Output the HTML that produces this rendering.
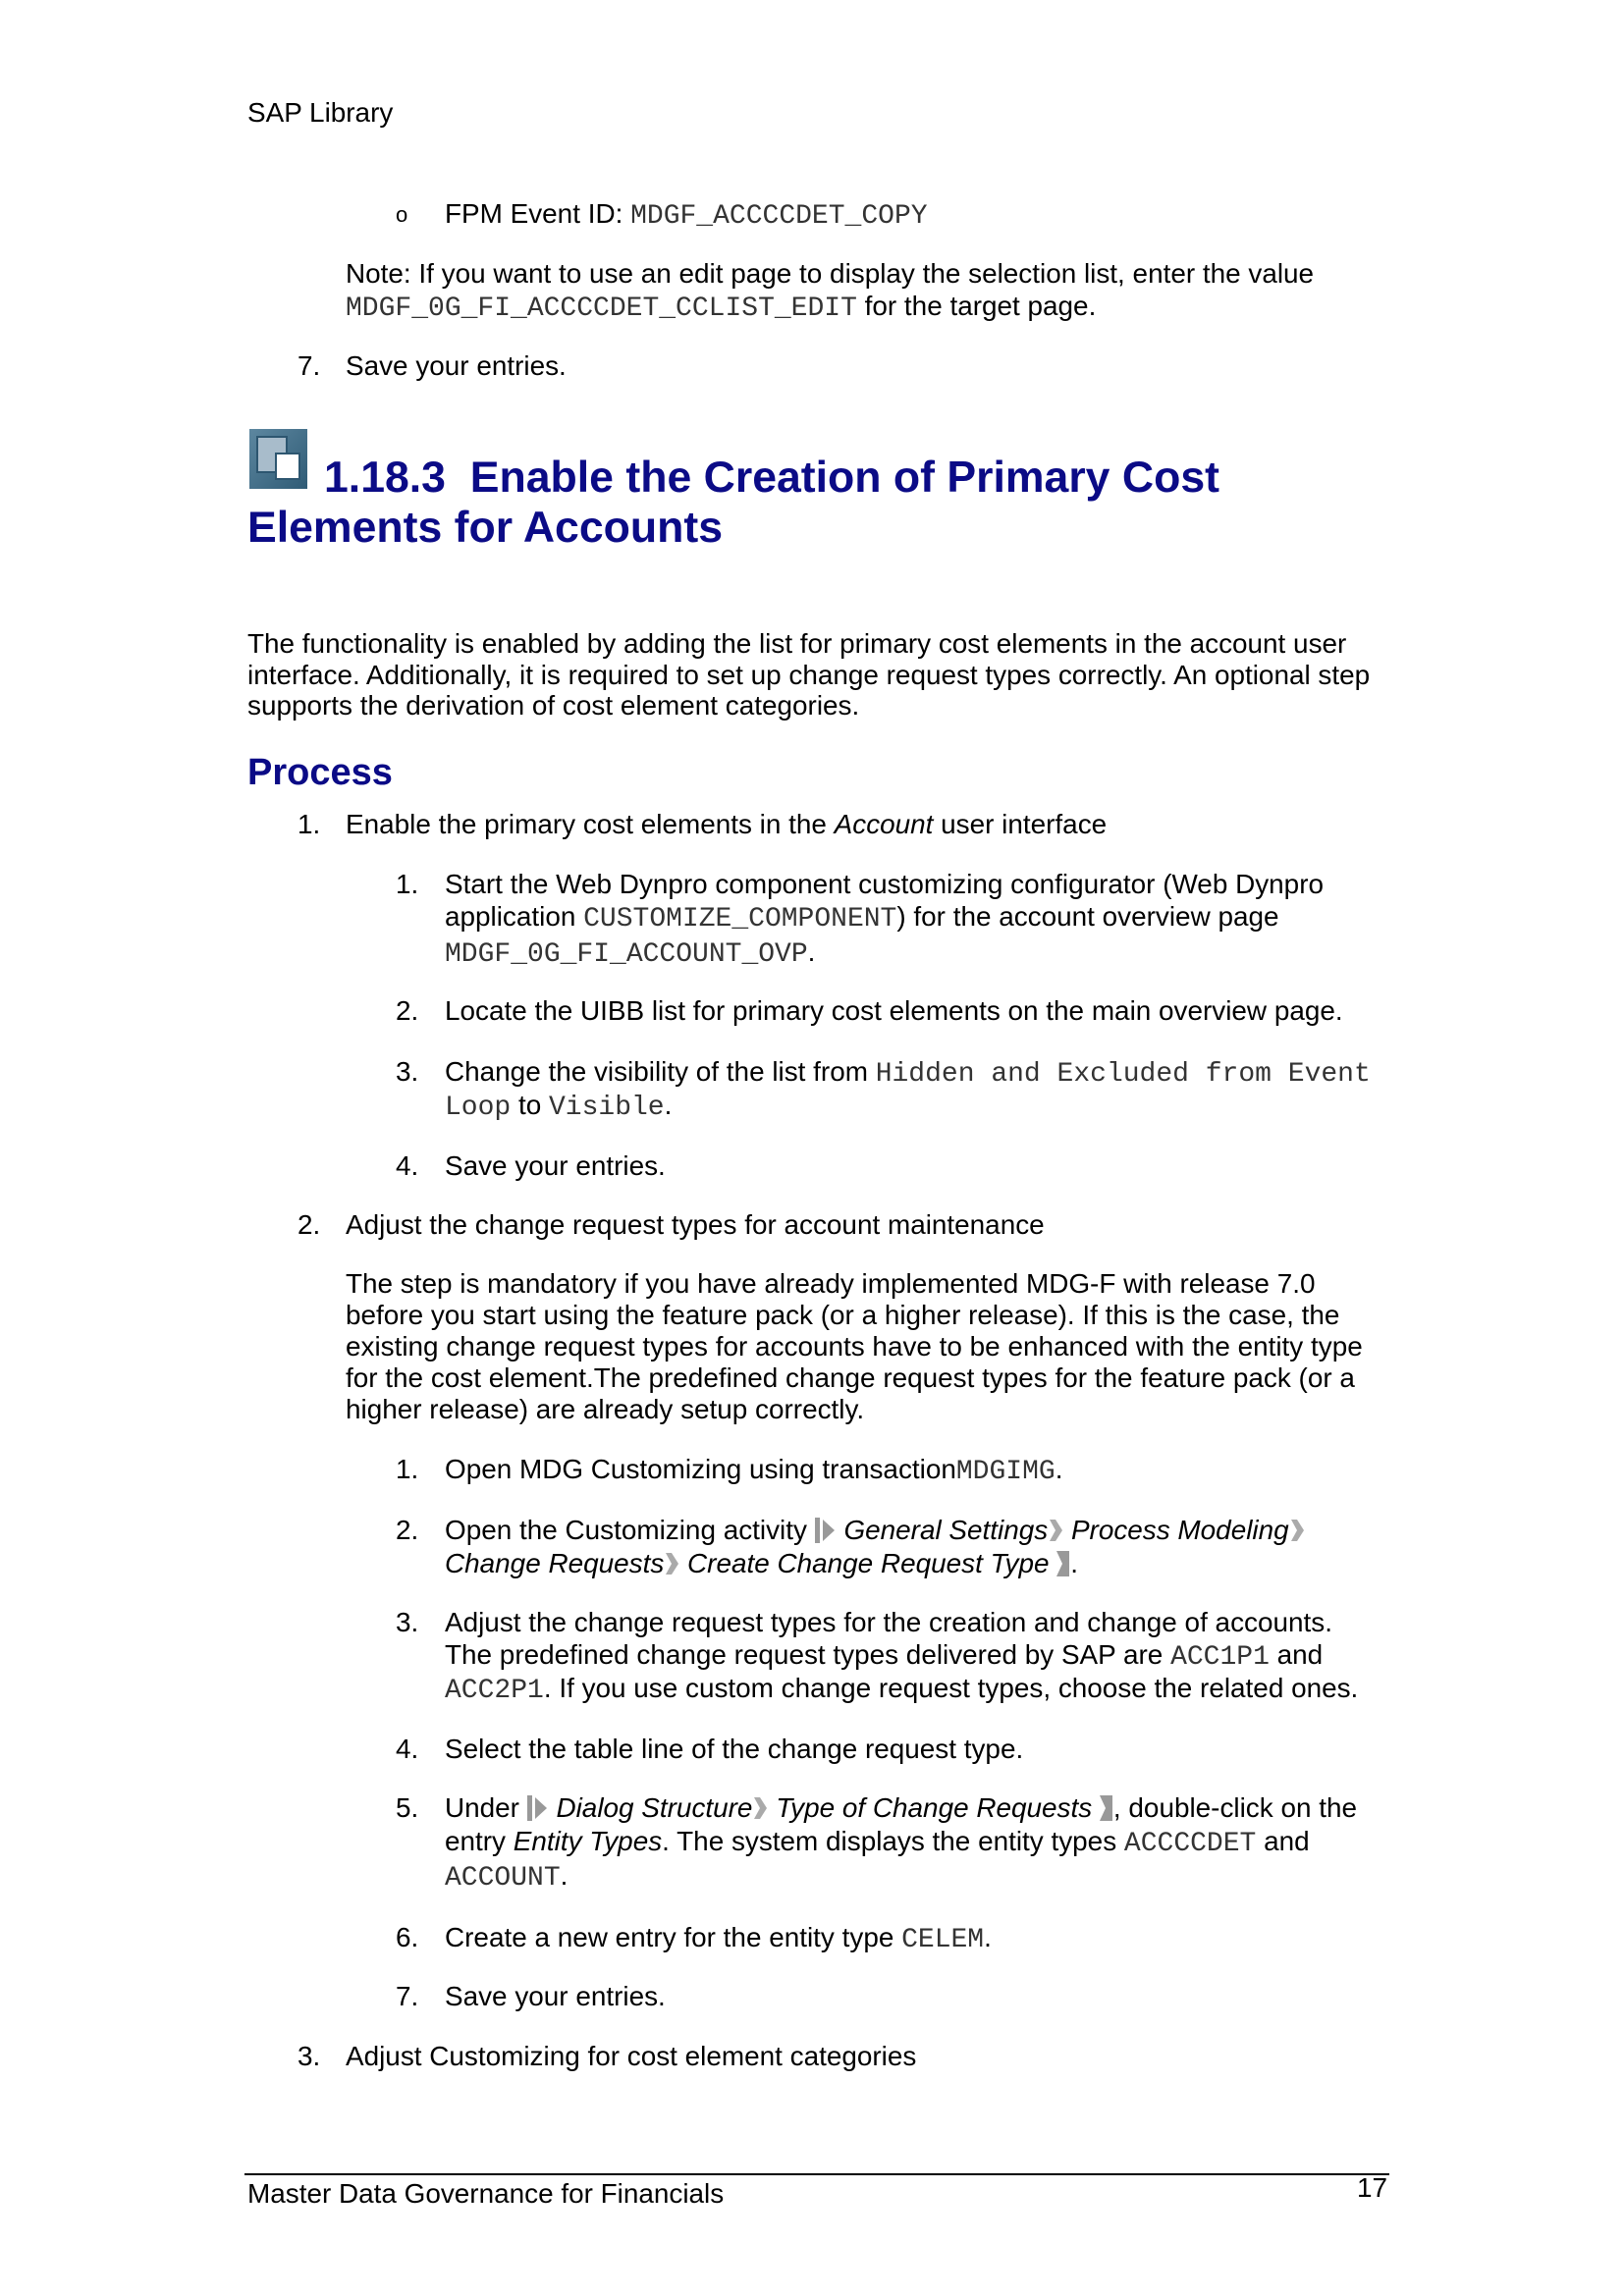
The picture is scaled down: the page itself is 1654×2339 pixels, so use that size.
<!DOCTYPE html>
<html><head><meta charset="utf-8"><style>
html,body{margin:0;padding:0;background:#fff}
body{width:1654px;height:2339px;position:relative;overflow:hidden;font-family:"Liberation Sans",Arial,sans-serif;font-size:27.9px;color:#000}
.l{position:absolute;white-space:nowrap;line-height:32px;height:32px}
.m{font-family:"Liberation Mono","Courier New",monospace;color:#333;font-size:28px}
.h{position:absolute;white-space:nowrap;color:#0b0b86;font-weight:bold}
i{font-style:italic}
svg.a{display:inline-block;vertical-align:-4px}
</style></head><body>
<div class="l" style="left:252px;top:99px">SAP Library</div>

<div class="l" style="left:403px;top:203px;font-size:22px">o</div>
<div class="l" style="left:453px;top:202px">FPM Event ID: <span class="m">MDGF_ACCCCDET_COPY</span></div>
<div class="l" style="left:352px;top:263px">Note: If you want to use an edit page to display the selection list, enter the value</div>
<div class="l" style="left:352px;top:296px"><span class="m">MDGF_0G_FI_ACCCCDET_CCLIST_EDIT</span> for the target page.</div>
<div class="l" style="left:303px;top:357px">7.</div><div class="l" style="left:352px;top:357px">Save your entries.</div>

<svg style="position:absolute;left:254px;top:437px" width="59" height="61">
<defs><linearGradient id="g" x1="0" y1="0" x2="1" y2="1"><stop offset="0" stop-color="#5d87a0"/><stop offset="1" stop-color="#2f5b75"/></linearGradient></defs>
<rect x="0" y="0" width="59" height="61" fill="url(#g)"/>
<rect x="8" y="8" width="30" height="36" fill="#a8bccb" stroke="#2d5670" stroke-width="2"/>
<rect x="27" y="25" width="24" height="26" fill="#fff" stroke="#2d5670" stroke-width="2"/>
</svg>
<div class="h" style="left:330px;top:462px;font-size:44.6px;line-height:50px">1.18.3&nbsp; Enable the Creation of Primary Cost</div>
<div class="h" style="left:252px;top:513px;font-size:44.6px;line-height:50px">Elements for Accounts</div>

<div class="l" style="left:252px;top:640px">The functionality is enabled by adding the list for primary cost elements in the account user</div>
<div class="l" style="left:252px;top:672px">interface. Additionally, it is required to set up change request types correctly. An optional step</div>
<div class="l" style="left:252px;top:703px">supports the derivation of cost element categories.</div>

<div class="h" style="left:252px;top:767px;font-size:38px;line-height:40px">Process</div>

<div class="l" style="left:303px;top:824px">1.</div><div class="l" style="left:352px;top:824px">Enable the primary cost elements in the <i>Account</i> user interface</div>

<div class="l" style="left:403px;top:885px">1.</div><div class="l" style="left:453px;top:885px">Start the Web Dynpro component customizing configurator (Web Dynpro</div>
<div class="l" style="left:453px;top:918px">application <span class="m">CUSTOMIZE_COMPONENT</span>) for the account overview page</div>
<div class="l" style="left:453px;top:954px"><span class="m">MDGF_0G_FI_ACCOUNT_OVP</span>.</div>
<div class="l" style="left:403px;top:1014px">2.</div><div class="l" style="left:453px;top:1014px">Locate the UIBB list for primary cost elements on the main overview page.</div>
<div class="l" style="left:403px;top:1076px">3.</div><div class="l" style="left:453px;top:1076px">Change the visibility of the list from <span class="m">Hidden and Excluded from Event</span></div>
<div class="l" style="left:453px;top:1110px"><span class="m">Loop</span> to <span class="m">Visible</span>.</div>
<div class="l" style="left:403px;top:1172px">4.</div><div class="l" style="left:453px;top:1172px">Save your entries.</div>

<div class="l" style="left:303px;top:1232px">2.</div><div class="l" style="left:352px;top:1232px">Adjust the change request types for account maintenance</div>
<div class="l" style="left:352px;top:1292px">The step is mandatory if you have already implemented MDG-F with release 7.0</div>
<div class="l" style="left:352px;top:1324px">before you start using the feature pack (or a higher release). If this is the case, the</div>
<div class="l" style="left:352px;top:1356px">existing change request types for accounts have to be enhanced with the entity type</div>
<div class="l" style="left:352px;top:1388px">for the cost element.The predefined change request types for the feature pack (or a</div>
<div class="l" style="left:352px;top:1420px">higher release) are already setup correctly.</div>

<div class="l" style="left:403px;top:1481px">1.</div><div class="l" style="left:453px;top:1481px">Open MDG Customizing using transaction<span class="m">MDGIMG</span>.</div>
<div class="l" style="left:403px;top:1543px">2.</div><div class="l" style="left:453px;top:1543px">Open the Customizing activity <svg class="a" width="22" height="26"><rect x="0" y="0" width="5" height="26" fill="#999"/><path d="M8 2 L20 13 L8 24 Z" fill="#999"/></svg> <i>General Settings</i><svg class="a" width="16" height="26"><path d="M2 2 L8 2 L15 13 L8 24 L2 24 L8 13 Z" fill="#aaa"/></svg> <i>Process Modeling</i><svg class="a" width="16" height="26"><path d="M2 2 L8 2 L15 13 L8 24 L2 24 L8 13 Z" fill="#aaa"/></svg></div>
<div class="l" style="left:453px;top:1577px"><i>Change Requests</i><svg class="a" width="16" height="26"><path d="M2 2 L8 2 L15 13 L8 24 L2 24 L8 13 Z" fill="#aaa"/></svg> <i>Create Change Request Type</i> <svg class="a" width="14" height="26"><path d="M0 0 L13 0 L13 26 L0 26 L6 13 Z" fill="#999"/></svg>.</div>
<div class="l" style="left:403px;top:1637px">3.</div><div class="l" style="left:453px;top:1637px">Adjust the change request types for the creation and change of accounts.</div>
<div class="l" style="left:453px;top:1670px">The predefined change request types delivered by SAP are <span class="m">ACC1P1</span> and</div>
<div class="l" style="left:453px;top:1704px"><span class="m">ACC2P1</span>. If you use custom change request types, choose the related ones.</div>
<div class="l" style="left:403px;top:1766px">4.</div><div class="l" style="left:453px;top:1766px">Select the table line of the change request type.</div>
<div class="l" style="left:403px;top:1826px">5.</div><div class="l" style="left:453px;top:1826px">Under <svg class="a" width="22" height="26"><rect x="0" y="0" width="5" height="26" fill="#999"/><path d="M8 2 L20 13 L8 24 Z" fill="#999"/></svg> <i>Dialog Structure</i><svg class="a" width="16" height="26"><path d="M2 2 L8 2 L15 13 L8 24 L2 24 L8 13 Z" fill="#aaa"/></svg> <i>Type of Change Requests</i> <svg class="a" width="14" height="26"><path d="M0 0 L13 0 L13 26 L0 26 L6 13 Z" fill="#999"/></svg>, double-click on the</div>
<div class="l" style="left:453px;top:1860px">entry <i>Entity Types</i>. The system displays the entity types <span class="m">ACCCCDET</span> and</div>
<div class="l" style="left:453px;top:1895px"><span class="m">ACCOUNT</span>.</div>
<div class="l" style="left:403px;top:1958px">6.</div><div class="l" style="left:453px;top:1958px">Create a new entry for the entity type <span class="m">CELEM</span>.</div>
<div class="l" style="left:403px;top:2018px">7.</div><div class="l" style="left:453px;top:2018px">Save your entries.</div>

<div class="l" style="left:303px;top:2079px">3.</div><div class="l" style="left:352px;top:2079px">Adjust Customizing for cost element categories</div>

<div style="position:absolute;left:249px;top:2214px;width:1166px;height:2px;background:#000"></div>
<div class="l" style="left:252px;top:2219px">Master Data Governance for Financials</div>
<div class="l" style="left:1382px;top:2213px">17</div>
</body></html>
